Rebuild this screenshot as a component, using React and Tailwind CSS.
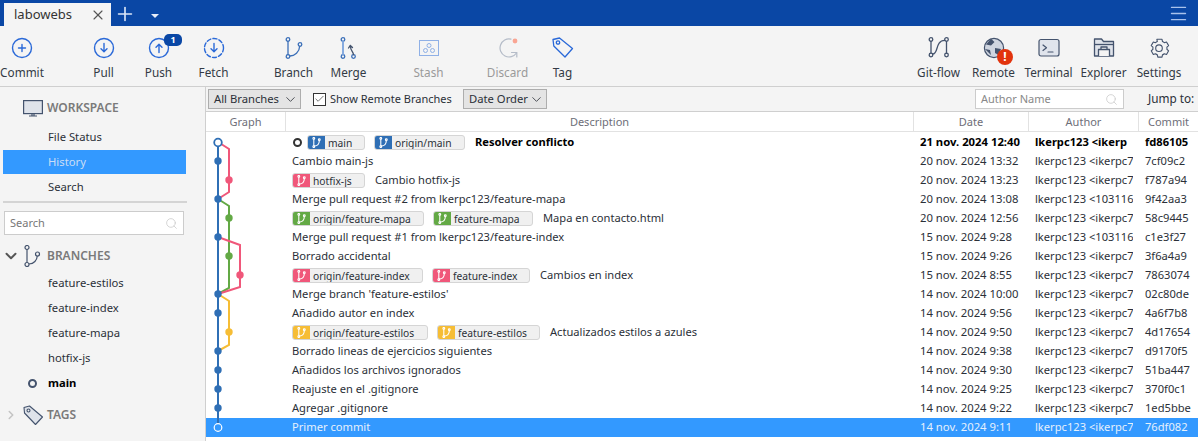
import React from 'react';
import { ChevronDown, ChevronRight, Search, X, Plus, Menu, Check } from 'lucide-react';

const BLUE = '#2a69d8';

const CircleIcon = ({ dashed, children }) => (
  <svg width="22" height="22" viewBox="0 0 22 22" fill="none" stroke={BLUE} strokeWidth="1.4" strokeLinecap="round" strokeLinejoin="round">
    <circle cx="11" cy="11" r="9.5" strokeDasharray={dashed ? '4 2.2' : undefined} />
    {children}
  </svg>
);

const GraphGlyph = ({ color = '#2a69d8', children }) => (
  <svg width="22" height="22" viewBox="0 0 22 22" fill="none" stroke={color} strokeWidth="1.3" strokeLinecap="round" strokeLinejoin="round">
    {children}
  </svg>
);

const icons = {
  commit: <CircleIcon><path d="M11 7.5v7M7.5 11h7" /></CircleIcon>,
  pull: <CircleIcon><path d="M11 6.5v8M8 11.8l3 3 3-3" /></CircleIcon>,
  push: <CircleIcon><path d="M11 15.5v-8M8 10.2l3-3 3 3" /></CircleIcon>,
  fetch: <CircleIcon dashed><path d="M11 6.5v8M8 11.8l3 3 3-3" /></CircleIcon>,
  branch: (
    <GraphGlyph color="#3b6fb8">
      <circle cx="5" cy="2.5" r="1.8" />
      <circle cx="5" cy="19.5" r="1.8" />
      <circle cx="17" cy="7.5" r="1.8" />
      <path d="M5 4.3v13.4M6.8 19c5 0 9.6-4 9.9-9.7" />
    </GraphGlyph>
  ),
  merge: (
    <GraphGlyph color="#3b6fb8">
      <circle cx="5" cy="2.5" r="1.8" />
      <circle cx="5" cy="19.5" r="1.8" />
      <circle cx="15.5" cy="19.5" r="1.8" />
      <path d="M5 4.3v13.4" stroke="#7ba3dd" strokeWidth="1.8" />
      <path d="M15.5 17.7c0-3-3-4-3-8M10.5 11l1.8-2.6L14.5 10.5" stroke="#44536d" />
    </GraphGlyph>
  ),
  stash: (
    <svg width="22" height="22" viewBox="0 0 22 22" fill="none" stroke="#8fb0e6" strokeWidth="1">
      <rect x="1.5" y="3.5" width="19" height="15" />
      <circle cx="11" cy="8.5" r="2" />
      <circle cx="7.5" cy="13.5" r="2" />
      <circle cx="14.5" cy="13.5" r="2" />
    </svg>
  ),
  discard: (
    <svg width="22" height="22" viewBox="0 0 22 22" fill="none" stroke="#b5bcc8" strokeWidth="1.2" strokeLinecap="round">
      <path d="M14 2.2A9 9 0 1 0 19.5 16" />
      <path d="M14.5 15.500h5.300v4.500" />
      <circle cx="18" cy="4" r="2.400" fill="#f9a593" stroke="none" />
    </svg>
  ),
  tag: (
    <svg width="22" height="22" viewBox="0 0 22 22" fill="none" stroke={BLUE} strokeWidth="1.3" strokeLinejoin="round">
      <path d="M1 2.500 7.500 1 20.500 11.500 13 20 1.800 9z" />
      <circle cx="6" cy="5.500" r="1.700" />
    </svg>
  ),
  gitflow: (
    <GraphGlyph color="#44536d">
      <circle cx="3" cy="2.500" r="1.800" />
      <circle cx="3" cy="18" r="1.800" />
      <circle cx="18.500" cy="2.500" r="1.800" />
      <circle cx="18.500" cy="18" r="1.800" />
      <path d="M3 4.300v11.900M18.500 4.300v11.900M4.600 17.200c6.200 0 2.200-13.800 12.200-13.800" />
    </GraphGlyph>
  ),
  remote: (
    <svg width="22" height="22" viewBox="0 0 22 22" fill="#cfd5e0" stroke="#44536d" strokeWidth="1.2">
      <circle cx="11" cy="11" r="9.600" />
      <path d="M8 1.800 11.500 5 8 8.500 3 7.500zM12 11l6 1-2.500 6-3.500-2zM2 12l5 1 1 5" fill="#44536d" stroke="none" />
    </svg>
  ),
  terminal: (
    <svg width="22" height="22" viewBox="0 0 22 22" fill="#e0e4ec" stroke="#44536d" strokeWidth="1.2" strokeLinecap="round" strokeLinejoin="round">
      <rect x="1" y="2.500" width="20" height="16.500" rx="2" />
      <path d="m5 8 3.500 2.800L5 13.500M10 15h5" fill="none" />
    </svg>
  ),
  explorer: (
    <svg width="22" height="22" viewBox="0 0 22 22" fill="#dfe3ea" stroke="#44536d" strokeWidth="1.3" strokeLinejoin="round">
      <path d="M1.500 2h7l2 2.500h10V19h-19z" />
      <path d="M1.500 7.500h19" fill="none" />
      <path d="M5.500 19v-6.500h11V19M8 12.500V10h6v2.500" fill="#f4f4f4" />
    </svg>
  ),
  settings: (
    <svg width="22" height="22" viewBox="0 0 24 24" fill="none" stroke="#44536d" strokeWidth="1.2" strokeLinejoin="round">
      <path d="M9.670 2.500 10.200 5a7.300 7.300 0 0 0-2 1.200L5.800 5.400 3.500 9.400l1.900 1.700a7.300 7.300 0 0 0 0 2.300l-1.900 1.700 2.300 4 2.400-.8a7.300 7.300 0 0 0 2 1.200l.5 2.500h4.600l.5-2.500a7.300 7.300 0 0 0 2-1.200l2.400.8 2.300-4-1.900-1.700a7.300 7.300 0 0 0 0-2.300l1.900-1.700-2.300-4-2.400.8a7.300 7.300 0 0 0-2-1.200l-.5-2.500z" />
      <circle cx="12" cy="12.200" r="3.600" />
    </svg>
  ),
};

const ToolButton = ({ id, label, disabled, children, className = 'w-[55px]' }) => (
  <div className={`relative flex flex-col items-center pt-[11px] ${className}`}>
    <div className="h-[22px] flex items-center justify-center">{icons[id]}</div>
    <span className={`mt-[5px] text-[11.75px] leading-[16px] whitespace-nowrap ${disabled ? 'text-[#9a9a9a]' : 'text-[#333a45]'}`}>{label}</span>
    {children}
  </div>
);

const TitleBar = () => (
  <div className="h-[27px] bg-[#0a47a5] flex items-end border-b border-[#a9b4c6]">
    <div className="ml-[4px] w-[107px] h-[23px] bg-[#f4f4f4] flex items-center justify-between pl-[10px] pr-[5px]">
      <span className="text-[13px] text-[#333]">labowebs</span>
      <X size={16} strokeWidth={1.7} className="text-[#555]" />
    </div>
    <div className="h-[24px] flex items-center ml-[3px] text-white">
      <Plus size={22} strokeWidth={1.8} className="text-[#dbe6f7]" />
      <div className="ml-[15px] mt-[3px] w-0 h-0 border-x-[4px] border-x-transparent border-t-[4px] border-t-[#e8eef9]" />
    </div>
    <div className="flex-1" />
    <div className="h-[26px] flex items-center pr-[9px]">
      <Menu size={21} strokeWidth={1.6} className="text-[#a9c2ec]" />
    </div>
  </div>
);

const Toolbar = () => (
  <div className="h-[61px] bg-[#f4f4f4] border-b border-[#cfcfcf] flex -mt-px">
    <ToolButton id="commit" label="Commit" className="w-[44px]" />
    <div className="w-[32px]" />
    <ToolButton id="pull" label="Pull" />
    <ToolButton id="push" label="Push">
      <span className="absolute top-[8px] left-[33px] w-[18px] h-[12px] rounded-[5px] bg-[#0a47a5] text-white text-[9px] font-bold leading-[12px] text-center">1</span>
    </ToolButton>
    <ToolButton id="fetch" label="Fetch" />
    <div className="w-[25px]" />
    <ToolButton id="branch" label="Branch" />
    <ToolButton id="merge" label="Merge" />
    <div className="w-[25px]" />
    <ToolButton id="stash" label="Stash" disabled />
    <div className="w-[24px]" />
    <ToolButton id="discard" label="Discard" disabled />
    <ToolButton id="tag" label="Tag" />
    <div className="flex-1" />
    <ToolButton id="gitflow" label="Git-flow" />
    <ToolButton id="remote" label="Remote">
      <span className="absolute top-[23px] left-[31px] w-[16px] h-[16px] rounded-full bg-[#e2330d] text-white text-[12px] font-bold leading-[16px] text-center">!</span>
    </ToolButton>
    <ToolButton id="terminal" label="Terminal" />
    <ToolButton id="explorer" label="Explorer" />
    <ToolButton id="settings" label="Settings" className="w-[56px] mr-[11px]" />
  </div>
);

const Sidebar = () => (
  <div className="w-[206px] shrink-0 bg-[#f4f4f4] border-r border-[#cfcfcf] text-[11.25px] text-[#2b3038]">
    <div className="h-[37px] flex items-center pl-[23px] pt-[5px]">
      <svg width="20" height="17" viewBox="0 0 20 17" fill="#dfe3ea" stroke="#44536d" strokeWidth="1.2">
        <rect x="0.600" y="0.600" width="18.800" height="13" />
        <path d="M6 16h8M9 13.600V16M11 13.600V16" fill="none" />
      </svg>
      <span className="ml-[4px] text-[12px] font-semibold text-[#7a7a7a]">WORKSPACE</span>
    </div>
    <div className="h-[26px] pl-[48px] flex items-center">File Status</div>
    <div className="ml-[3px] w-[183px] h-[24px] pl-[45px] flex items-center bg-[#3399ff] text-[#c9ddf5]">History</div>
    <div className="h-[26px] pl-[48px] flex items-center">Search</div>
    <div className="ml-[3px] w-[184px] h-[2px] mt-[1px] bg-[#d4d4d4]" />
    <div className="ml-[4px] w-[180px] mt-[8px] h-[24px] bg-white border border-[#cccccc] flex items-center justify-between pl-[5px] pr-[5px] text-[11px] text-[#777]">
      <span>Search</span>
      <Search size={13} strokeWidth={1.3} className="text-[#c4c4c4]" />
    </div>
    <div className="h-[26px] mt-[8px] flex items-center pl-[2px]">
      <ChevronDown size={18} strokeWidth={2.6} className="text-[#555]" />
      <svg className="ml-[3px]" width="18" height="22" viewBox="0 0 18 22" fill="none" stroke="#44536d" strokeWidth="1.2">
        <circle cx="4" cy="2.500" r="2" />
        <circle cx="4" cy="19.500" r="2" />
        <circle cx="14.500" cy="9" r="2" />
        <path d="M4 4.500v13M6 19c5 0 8-4 8.300-8" />
      </svg>
      <span className="ml-[6px] text-[12px] font-semibold text-[#7a7a7a]">BRANCHES</span>
    </div>
    <div className="mt-[2px]">
      {['feature-estilos', 'feature-index', 'feature-mapa', 'hotfix-js'].map((b) => (
        <div key={b} className="h-[25px] pl-[48px] flex items-center">{b}</div>
      ))}
      <div className="h-[25px] pl-[28px] flex items-center font-bold text-black">
        <span className="w-[9px] h-[9px] rounded-full border-2 border-[#44536d] mr-[11px]" />
        main
      </div>
    </div>
    <div className="h-[24px] mt-[7px] flex items-center pl-[4px]">
      <ChevronRight size={14} strokeWidth={2.6} className="text-[#c4c4c4]" />
      <svg className="ml-[5px]" width="20" height="20" viewBox="0 0 20 20" fill="#dfe3ea" stroke="#44536d" strokeWidth="1.1" strokeLinejoin="round">
        <path d="M1 2.500 6.500 1 19.500 12 12.500 19.500 1.500 8z" />
        <circle cx="5.500" cy="5.500" r="1.500" fill="#f4f4f4" />
      </svg>
      <span className="ml-[4px] text-[12px] font-semibold text-[#7a7a7a]">TAGS</span>
    </div>
  </div>
);

const FilterBar = () => (
  <div className="h-[25px] bg-[#f4f4f4] border-b border-[#cfcfcf] flex items-center text-[11px] text-[#2b3038]">
    <div className="ml-[2px] w-[93px] h-[20px] bg-[#e4e4e4] border border-[#adadad] flex items-center justify-between pl-[5px] pr-[2px] whitespace-nowrap">
      <span className="text-[11.25px]">All Branches</span>
      <ChevronDown size={15} strokeWidth={1.3} />
    </div>
    <div className="ml-[12px] w-[13px] h-[13px] border border-[#333] bg-white flex items-center justify-center">
      <Check size={12} strokeWidth={1.5} className="text-[#333]" />
    </div>
    <span className="ml-[4px] w-[133px] whitespace-nowrap">Show Remote Branches</span>
    <div className="w-[84px] h-[20px] bg-[#e4e4e4] border border-[#adadad] flex items-center justify-between pl-[5px] pr-[2px] whitespace-nowrap">
      <span className="text-[11.25px]">Date Order</span>
      <ChevronDown size={15} strokeWidth={1.3} />
    </div>
    <div className="flex-1" />
    <div className="w-[149px] h-[20px] bg-white border border-[#cccccc] flex items-center justify-between pl-[5px] pr-[5px] text-[#888]">
      <span>Author Name</span>
      <Search size={13} strokeWidth={1.3} className="text-[#c4c4c4]" />
    </div>
    <span className="ml-[24px] w-[50px] text-[11.75px] whitespace-nowrap">Jump to:</span>
  </div>
);

const HeaderRow = () => (
  <div className="h-[20px] flex text-[11px] text-[#6e6e78] bg-white border-b border-[#e2e2e2] text-center">
    <div className="w-[80px] border-r border-[#e2e2e2] leading-[19px]">Graph</div>
    <div className="w-[628px] border-r border-[#e2e2e2] leading-[19px]">Description</div>
    <div className="w-[115px] border-r border-[#e2e2e2] leading-[19px]">Date</div>
    <div className="w-[110px] border-r border-[#e2e2e2] leading-[19px]">Author</div>
    <div className="flex-1 leading-[19px]">Commit</div>
  </div>
);

const tagColors = {
  blue: 'bg-[#2f6fb5]',
  pink: 'bg-[#f0577a]',
  green: 'bg-[#63a945]',
  yellow: 'bg-[#f6bd35]',
};

const RefTag = ({ name, color, width }) => (
  <div className={`h-[15px] shrink-0 flex rounded-[3px] border border-[#d5d5d5] bg-[#f0f0f0] overflow-hidden ${width}`}>
    <div className={`w-[18px] shrink-0 -ml-px -my-px h-[15px] flex items-center justify-center ${tagColors[color]}`}>
      <svg width="9" height="11" viewBox="0 0 9 11" fill="none" stroke="white" strokeWidth="1.100" strokeLinecap="round">
        <circle cx="1.800" cy="1.400" r="0.900" />
        <circle cx="1.800" cy="9.600" r="0.900" />
        <circle cx="7.300" cy="2.800" r="0.900" />
        <path d="M1.800 2.400v6.200M2.500 9c3 0 4.700-2.500 4.800-5.200" />
      </svg>
    </div>
    <span className="ml-[3px] text-[10.25px] font-normal leading-[14px] text-[#2b3038] whitespace-nowrap">{name}</span>
  </div>
);

const commits = [
  { head: true, bold: true, tags: [['main', 'blue', 'w-[58px]'], ['origin/main', 'blue', 'w-[91px]']], text: 'Resolver conflicto', date: '21 nov. 2024 12:40', author: 'lkerpc123 <ikerp', hash: 'fd86105' },
  { text: 'Cambio main-js', date: '20 nov. 2024 13:32', author: 'lkerpc123 <ikerpc7', hash: '7cf09c2' },
  { tags: [['hotfix-js', 'pink', 'w-[73px]']], text: 'Cambio hotfix-js', date: '20 nov. 2024 13:23', author: 'lkerpc123 <ikerpc7', hash: 'f787a94' },
  { text: 'Merge pull request #2 from lkerpc123/feature-mapa', date: '20 nov. 2024 13:08', author: 'lkerpc123 <103116', hash: '9f42aa3' },
  { tags: [['origin/feature-mapa', 'green', 'w-[132px]'], ['feature-mapa', 'green', 'w-[100px]']], text: 'Mapa en contacto.html', date: '20 nov. 2024 12:56', author: 'lkerpc123 <ikerpc7', hash: '58c9445' },
  { text: 'Merge pull request #1 from lkerpc123/feature-index', date: '15 nov. 2024 9:28', author: 'lkerpc123 <103116', hash: 'c1e3f27' },
  { text: 'Borrado accidental', date: '15 nov. 2024 9:26', author: 'lkerpc123 <ikerpc7', hash: '3f6a4a9' },
  { tags: [['origin/feature-index', 'pink', 'w-[131px]'], ['feature-index', 'pink', 'w-[98px]']], text: 'Cambios en index', date: '15 nov. 2024 8:55', author: 'lkerpc123 <ikerpc7', hash: '7863074' },
  { text: "Merge branch 'feature-estilos'", date: '14 nov. 2024 10:00', author: 'lkerpc123 <ikerpc7', hash: '02c80de' },
  { text: 'Añadido autor en index', date: '14 nov. 2024 9:56', author: 'lkerpc123 <ikerpc7', hash: '4a6f7b8' },
  { tags: [['origin/feature-estilos', 'yellow', 'w-[136px]'], ['feature-estilos', 'yellow', 'w-[103px]']], text: 'Actualizados estilos a azules', date: '14 nov. 2024 9:50', author: 'lkerpc123 <ikerpc7', hash: '4d17654' },
  { text: 'Borrado lineas de ejercicios siguientes', date: '14 nov. 2024 9:38', author: 'lkerpc123 <ikerpc7', hash: 'd9170f5' },
  { text: 'Añadidos los archivos ignorados', date: '14 nov. 2024 9:30', author: 'lkerpc123 <ikerpc7', hash: '51ba447' },
  { text: 'Reajuste en el .gitignore', date: '14 nov. 2024 9:25', author: 'lkerpc123 <ikerpc7', hash: '370f0c1' },
  { text: 'Agregar .gitignore', date: '14 nov. 2024 9:22', author: 'lkerpc123 <ikerpc7', hash: '1ed5bbe' },
  { selected: true, text: 'Primer commit', date: '14 nov. 2024 9:11', author: 'lkerpc123 <ikerpc7', hash: '76df082' },
];

const CommitRow = ({ c }) => (
  <div className={`h-[19px] flex items-center text-[11.15px] whitespace-nowrap ${c.selected ? 'bg-[#3399ff] text-[#e6f0fc]' : 'text-[#2b3038]'} ${c.bold ? 'font-bold text-black' : ''}`}>
    <div className="w-[86px] shrink-0" />
    <div className="w-[622px] shrink-0 flex items-center gap-[9px]">
      {c.head && <span className="-mr-[4px] ml-[1px] w-[9px] h-[9px] rounded-full border-2 border-[#333]" />}
      {c.tags && c.tags.map(([name, color, width]) => <RefTag key={name} name={name} color={color} width={width} />)}
      <span className={c.tags ? 'ml-[1px]' : ''}>{c.text}</span>
    </div>
    <div className="w-[6px] shrink-0" />
    <div className="w-[102px] shrink-0 overflow-hidden text-[11.3px]">{c.date}</div>
    <div className="w-[13px] shrink-0" />
    <div className="w-[98px] shrink-0 overflow-hidden">{c.author}</div>
    <div className="pl-[12px]">{c.hash}</div>
  </div>
);

const nodes = [
  [12, 161], [23, 180], [12, 199], [23, 218], [12, 237], [23, 256], [34, 275], [12, 294], [12, 313], [23, 332], [12, 351], [12, 370], [12, 389], [12, 408],
];

// y values are window coordinates, the viewBox starts where the list starts
const Graph = () => (
  <svg className="absolute left-0 top-0 pointer-events-none" width="80" height="309" viewBox="0 132 80 309" fill="none">
    <path d="M12 142V427" stroke="#2f6fb5" strokeWidth="2" />
    <path d="M12 142 23 149V192L12 199" stroke="#f0577a" strokeWidth="2" />
    <path d="M12 199 23 206V288L12 294" stroke="#63a945" strokeWidth="2" />
    <path d="M12 237 34 245V287L12 294" stroke="#f0577a" strokeWidth="2" />
    <path d="M12 294 23 301V345L12 351" stroke="#f6bd35" strokeWidth="2" />
    {nodes.map(([x, y]) => {
      const fill = x === 34 || y === 180 ? '#f0577a' : x === 23 && y === 332 ? '#f6bd35' : x === 23 ? '#63a945' : '#2f6fb5';
      return <circle key={`${x}-${y}`} cx={x} cy={y} r="3.700" fill={fill} />;
    })}
    <circle cx="12" cy="142.500" r="3.800" fill="white" stroke="#2f6fb5" strokeWidth="1.800" />
    <circle cx="12" cy="427.500" r="3.800" fill="#3399ff" stroke="white" strokeWidth="1.200" />
  </svg>
);

export default function App() {
  return (
    <div className="w-[1198px] h-[441px] overflow-hidden bg-white" style={{ fontFamily: '"Noto Sans", sans-serif' }}>
      <TitleBar />
      <Toolbar />
      <div className="flex h-[354px]">
        <Sidebar />
        <div className="flex-1 min-w-0">
          <FilterBar />
          <HeaderRow />
          <div className="relative pt-[1px]">
            {commits.map((c) => <CommitRow key={c.hash} c={c} />)}
            <Graph />
          </div>
        </div>
      </div>
    </div>
  );
}
